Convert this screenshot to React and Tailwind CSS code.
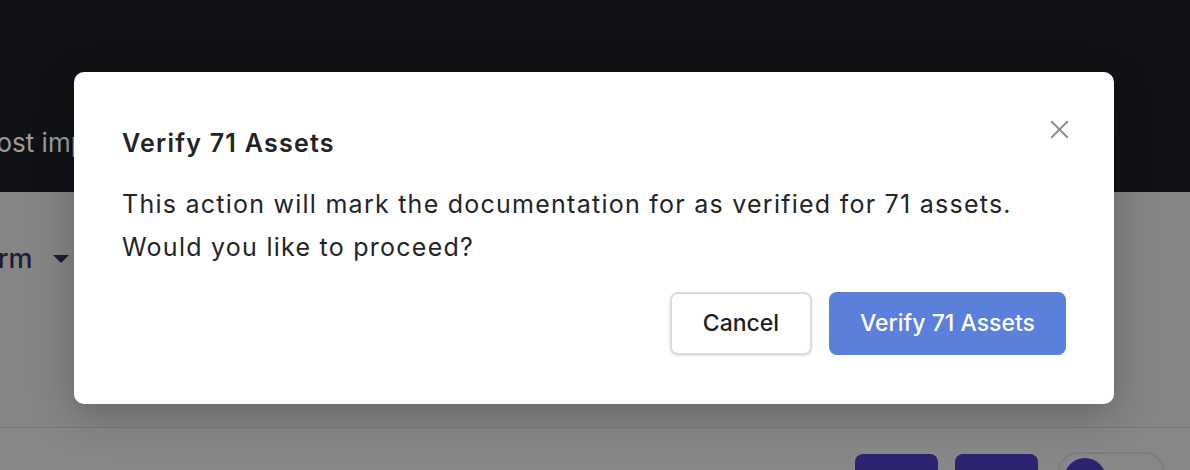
import React from "react";
import { X } from "lucide-react";

const VerifyModal = () => {
  return (
    <div className="absolute inset-0 flex items-start pl-[74px] pt-[72px]">
      <div className="w-[1040px] rounded-[10px] bg-white px-12 pt-[50px] pb-[49px] shadow-[0_10px_40px_rgba(0,0,0,0.25)] relative">
        <button className="absolute right-[39px] top-[42px] text-[#8a8a8a]">
          <X className="w-[31px] h-[31px]" strokeWidth={1.4} />
        </button>
        <h2 className="text-[25px] leading-[42px] font-semibold tracking-[0.05em] text-[#222326]">
          Verify 71 Assets
        </h2>
        <p className="mt-[19px] text-[25px] leading-[43px] tracking-[0.05em] text-[#232428]">
          This action will mark the documentation for as verified for 71 assets.
          <br />
          Would you like to proceed?
        </p>
        <div className="mt-[23px] flex justify-end gap-[17px]">
          <button className="h-[63px] w-[142px] rounded-[8px] border-2 border-[#dcdcdc] bg-white text-[23px] font-medium text-[#1d1e22] shadow-sm">
            Cancel
          </button>
          <button className="h-[63px] w-[237px] rounded-[8px] bg-[#5b80db] text-[23px] font-medium text-white">
            Verify 71 Assets
          </button>
        </div>
      </div>
    </div>
  );
};

export default function App() {
  return (
    <div
      className="relative w-[1190px] h-[470px] overflow-hidden bg-[#878787]"
      style={{ fontFamily: "Inter, 'Noto Sans', sans-serif" }}
    >
      {/* header */}
      <div className="h-[192px] bg-[#111216] pt-[124px]">
        <p className="-ml-[27px] text-[26px] leading-[38px] text-[#9c9c9e]">
          Most impactful assets
        </p>
      </div>

      {/* filters row */}
      <div className="h-[236px] bg-[#858585] border-b border-[#7b7b7b] pt-[47px]">
        <div className="flex items-center -ml-[76px] gap-[20px]">
          <span className="text-[27px] font-medium text-[#1c1d33]">Platform</span>
          <span className="w-0 h-0 border-l-[8px] border-r-[8px] border-t-[8px] border-l-transparent border-r-transparent border-t-[#1c1d33]" />
        </div>
      </div>

      {/* bottom toolbar */}
      <div className="flex justify-end gap-[17px] pr-[25px] pt-[26px]">
        <div className="h-[40px] w-[83px] rounded-[8px] bg-[#2c2470]" />
        <div className="h-[40px] w-[83px] rounded-[8px] bg-[#2c2470]" />
        <div className="h-[40px] w-[107px] -mt-[2px] rounded-full border-2 border-[#7e7e7e] p-[4px] ml-[3px]">
          <div className="h-[42px] w-[42px] rounded-full bg-[#2c2470]" />
        </div>
      </div>

      <VerifyModal />
    </div>
  );
}
